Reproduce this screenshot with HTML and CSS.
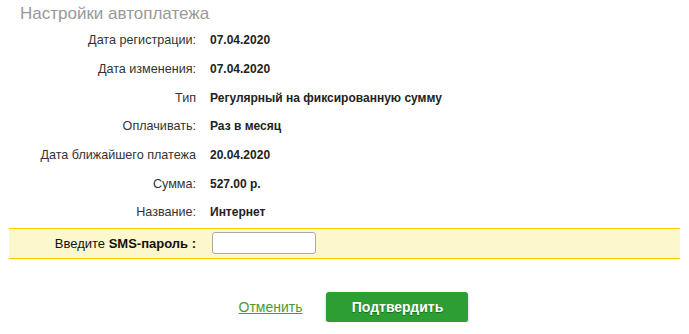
FILE: index.html
```html
<!DOCTYPE html>
<html lang="ru">
<head>
    <meta charset="UTF-8">
    <title>Настройки автоплатежа</title>
    <link rel="stylesheet" href="styles.css">
</head>
<body>

<div class="page">
    <h2 class="title">Настройки автоплатежа</h2>

    <div class="details">
        <div class="row"><span class="label">Дата регистрации:</span><span class="value">07.04.2020</span></div>
        <div class="row"><span class="label">Дата изменения:</span><span class="value">07.04.2020</span></div>
        <div class="row"><span class="label">Тип</span><span class="value">Регулярный на фиксированную сумму</span></div>
        <div class="row"><span class="label">Оплачивать:</span><span class="value">Раз в месяц</span></div>
        <div class="row"><span class="label">Дата ближайшего платежа</span><span class="value">20.04.2020</span></div>
        <div class="row"><span class="label">Сумма:</span><span class="value">527.00 р.</span></div>
        <div class="row"><span class="label">Название:</span><span class="value">Интернет</span></div>
    </div>

    <div class="sms-box">
        <label class="sms-label" for="sms">Введите <b>SMS-пароль :</b></label>
        <input type="text" id="sms" class="sms-input" autofocus>
    </div>

    <div class="actions">
        <a href="#" class="cancel-link">Отменить</a>
        <button type="button" class="confirm-btn">Подтвердить</button>
    </div>
</div>

</body>
</html>
```

FILE: styles.css
```css
body {
    font-family: "Liberation Sans", Arial, sans-serif;
    margin: 0;
    padding: 0;
    background-color: #fff;
    color: #333;
}
.page {
    padding: 0 9px;
}
.title {
    margin: 0;
    padding: 4px 0 0 11px;
    height: 22px;
    font-size: 17px;
    font-weight: normal;
    color: #999;
}
.details {
    display: flex;
    flex-direction: column;
}
.row {
    display: flex;
    align-items: center;
    height: 28.7px;
    font-size: 12px;
}
.label {
    width: 187px;
    text-align: right;
    font-size: 12.6px;
    color: #333;
}
.value {
    margin-left: 14px;
    font-weight: bold;
    color: #222;
}
.sms-box {
    display: flex;
    align-items: center;
    height: 29px;
    margin-top: 1px;
    background-color: #fdf7cc;
    border-top: 1px solid #ffcc00;
    border-bottom: 1px solid #ffcc00;
}
.sms-label {
    width: 187px;
    text-align: right;
    font-size: 13px;
    color: #111;
}
.sms-input {
    margin-left: 16px;
    width: 104px;
    height: 22px;
    box-sizing: border-box;
    padding: 2px 4px;
    border: 1px solid #a9a9a9;
    border-radius: 3px;
    background-color: #fff;
    font-size: 13px;
    outline: none;
}
.actions {
    display: flex;
    align-items: center;
    justify-content: center;
    gap: 24px;
    margin-top: 33px;
    padding-left: 18px;
}
.cancel-link {
    font-size: 14px;
    color: #4e9a2e;
    text-decoration: underline;
}
.confirm-btn {
    width: 142px;
    height: 30px;
    background-color: #2c9e33;
    color: #fff;
    border: none;
    border-radius: 3px;
    font-family: "Liberation Sans", Arial, sans-serif;
    font-size: 14px;
    font-weight: bold;
    text-shadow: 0 1px 1px rgba(0, 0, 0, 0.35);
    box-shadow: 0 2px 3px rgba(0, 0, 0, 0.25);
    cursor: pointer;
}
.confirm-btn:hover {
    background-color: #27902d;
}
```
